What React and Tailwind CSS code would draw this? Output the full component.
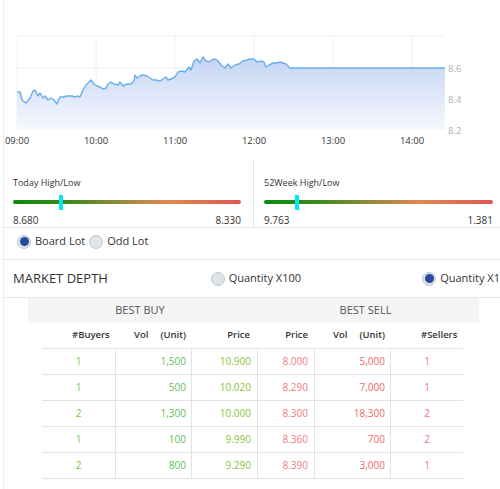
import React from 'react'

const FONT = { fontFamily: '"Open Sans", "Liberation Sans", sans-serif' }

// chart line, page coordinates
const PTS = [
  [17, 92], [20, 92], [22, 100], [26, 103], [30, 98], [33, 91], [35, 90], [38, 96], [40, 93], [43, 98],
  [45, 96], [48, 100], [51, 98], [54, 100], [57, 104], [60, 97], [63, 97], [67, 96], [72, 96], [75, 97],
  [78, 96], [80, 97], [83, 90], [86, 85], [89, 82], [91, 80], [94, 84], [97, 86], [100, 87], [103, 89],
  [106, 88], [108, 84], [111, 82], [114, 84], [118, 85], [120, 82], [123, 86], [127, 84], [131, 84],
  [134, 81], [135, 75], [137, 78], [140, 76], [143, 75], [147, 76], [150, 78], [153, 80], [156, 80],
  [160, 81], [163, 79], [166, 77], [168, 80], [171, 79], [175, 77], [178, 72], [182, 71], [185, 72],
  [189, 67], [191, 70], [194, 61], [197, 59], [200, 63], [203, 57], [206, 61], [209, 62], [212, 60],
  [215, 59], [218, 61], [222, 66], [225, 68], [228, 64], [231, 68], [235, 65], [239, 64], [243, 61],
  [247, 60], [250, 59], [254, 59], [257, 62], [261, 61], [264, 62], [266, 67], [269, 65], [273, 63],
  [277, 63], [280, 62], [283, 63], [286, 64], [290, 68], [445, 68],
]

const XTICKS = [
  [17, '09:00'], [96, '10:00'], [175, '11:00'], [254, '12:00'], [333, '13:00'], [412, '14:00'],
]

function Chart() {
  const line = PTS.map((p, i) => `${i ? 'L' : 'M'}${p[0]},${p[1]}`).join(' ')
  const area = `${line} L445,130 L17,130 Z`
  return (
    <svg width="496" height="160" viewBox="4 0 496 160" className="block">
      <defs>
        <linearGradient id="fill" x1="0" y1="0" x2="0" y2="1">
          <stop offset="0" stopColor="#c3d5f4" />
          <stop offset="1" stopColor="#f7f8fd" />
        </linearGradient>
      </defs>
      {[36, 68, 99].map((y) => (
        <line key={y} x1="17" x2="445" y1={y} y2={y} stroke="#f0f0f0" strokeWidth="1" />
      ))}
      {XTICKS.map(([x]) => (
        <line key={x} x1={x} x2={x} y1="36" y2="130" stroke="#f0f0f0" strokeWidth="1" />
      ))}
      <path d={area} fill="url(#fill)" />
      <path d={line} fill="none" stroke="#6aaeea" strokeWidth="1.4" strokeLinejoin="round" />
      {XTICKS.map(([x, t]) => (
        <text key={t} x={x} y="144" textAnchor="middle" fontSize="9.5" fill="#333" style={FONT}>{t}</text>
      ))}
      {[[68, '8.6'], [99, '8.4'], [130, '8.2']].map(([y, t]) => (
        <text key={t} x="448" y={y + 3.5} fontSize="9.5" fill="#b0b0b0" style={FONT}>{t}</text>
      ))}
    </svg>
  )
}

function RangeBar({ label, low, high, pos }) {
  return (
    <div className="flex flex-col">
      <div className="text-[9px] leading-[12px] text-[#333]">{label}</div>
      <div className="relative mt-[6px] h-[14px]">
        <div className="absolute left-0 right-0 top-[5px] h-[4px] rounded-full bg-[linear-gradient(90deg,#0c8a0c_0%,#3f8a1f_25%,#9a8a3c_48%,#e0894e_68%,#e05656_100%)]" />
        <div className="absolute top-0 h-[15px] w-[4px] bg-[#00e8f0]" style={{ left: pos }} />
      </div>
      <div className="mt-[4px] flex justify-between text-[10px] leading-[14px] text-[#333]">
        <span>{low}</span>
        <span>{high}</span>
      </div>
    </div>
  )
}

function Radio({ checked, label }) {
  return (
    <label className="flex items-center gap-[4px]">
      <span className="flex h-[14px] w-[14px] items-center justify-center rounded-full border border-[#c2c8d2] bg-[#dfe3ea]">
        {checked && <span className="h-[9px] w-[9px] rounded-full bg-[#2a4b9b]" />}
      </span>
      <span>{label}</span>
    </label>
  )
}

const ROWS = [
  ['1', '1,500', '10.900', '8.000', '5,000', '1'],
  ['1', '500', '10.020', '8.290', '7,000', '1'],
  ['2', '1,300', '10.000', '8.300', '18,300', '2'],
  ['1', '100', '9.990', '8.360', '700', '2'],
  ['2', '800', '9.290', '8.390', '3,000', '1'],
]

const COLS = 'grid grid-cols-[73px_76px_66px_57px_76px_73px]'

export default function App() {
  return (
    <div className="h-[489px] w-[500px] overflow-hidden bg-white pl-[3px]" style={FONT}>
      <div className="h-full border-l border-[#ebebeb]">
        <Chart />

        <div className="flex h-[68px] border-b border-[#e6e6e6]">
          <div className="w-[250px] border-r border-[#e6e6e6] pl-[9px] pr-[12px] pt-[17px]">
            <RangeBar label="Today High/Low" low="8.680" high="8.330" pos="46px" />
          </div>
          <div className="flex-1 pl-[10px] pr-[7px] pt-[17px]">
            <RangeBar label="52Week High/Low" low="9.763" high="1.381" pos="31px" />
          </div>
        </div>

        <div className="flex h-[32px] items-center gap-[4px] border-b border-[#e6e6e6] pb-[4px] pl-[13px] text-[11px] text-[#333]">
          <Radio checked label="Board Lot" />
          <Radio label="Odd Lot" />
        </div>

        <div className="flex h-[38px] items-center border-b border-[#e6e6e6] pl-[9px] text-[11px] text-[#333]">
          <div className="w-[199px] text-[13px] font-medium text-[#333]">MARKET DEPTH</div>
          <div className="w-[213px]">
            <Radio label="Quantity X100" />
          </div>
          <div className="whitespace-nowrap">
            <Radio checked label="Quantity X1" />
          </div>
        </div>

        <div className="ml-[24px] flex h-[25px] w-[451px] items-center bg-[#f5f5f5] text-[11px] text-[#555]">
          <div className="w-[224px] text-center">BEST BUY</div>
          <div className="flex-1 text-center">BEST SELL</div>
        </div>

        <div className="ml-[38px] w-[421px]">
          <div className={`${COLS} h-[25px] items-center text-[9.5px] font-semibold text-[#333]`}>
            <div className="pl-[30px]">#Buyers</div>
            <div className="flex justify-end gap-[12px] pr-[5px]"><span>Vol</span><span>(Unit)</span></div>
            <div className="pr-[7px] text-right">Price</div>
            <div className="pr-[6px] text-right">Price</div>
            <div className="flex justify-end gap-[12px] pr-[5px]"><span>Vol</span><span>(Unit)</span></div>
            <div className="pl-[31px]">#Sellers</div>
          </div>
          <div className="border-t border-[#e3e3e3] text-[10px]">
            {ROWS.map((r, i) => (
              <div key={i} className={`${COLS} h-[26px] items-center border-b border-[#e3e3e3]`}>
                <div className="flex h-full items-center justify-center text-[#72c94c]">{r[0]}</div>
                <div className="flex h-full items-center justify-end border-l border-[#e3e3e3] pr-[5px] text-[#5cc05c]">{r[1]}</div>
                <div className="flex h-full items-center justify-end border-l border-[#e3e3e3] pr-[6px] text-[#86c63c]">{r[2]}</div>
                <div className="flex h-full items-center justify-end border-l border-[#e3e3e3] pr-[6px] text-[#f27a7a]">{r[3]}</div>
                <div className="flex h-full items-center justify-end border-l border-[#e3e3e3] pr-[5px] text-[#f06a6a]">{r[4]}</div>
                <div className="flex h-full items-center justify-center border-l border-[#e3e3e3] text-[#f07080]">{r[5]}</div>
              </div>
            ))}
          </div>
        </div>
      </div>
    </div>
  )
}
